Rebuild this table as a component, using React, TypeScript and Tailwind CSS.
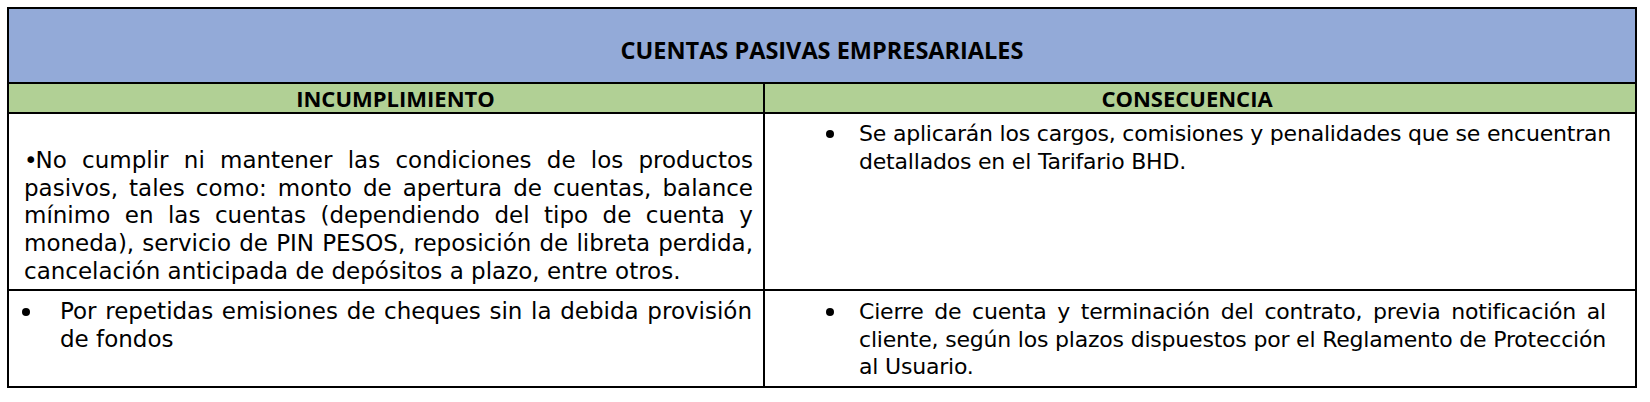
const HEAD = "font-['Open_Sans',sans-serif] font-bold leading-[26px] text-black";
const BODY = "font-['DejaVu_Sans',sans-serif] leading-[27.7px] text-black";
const LEFT = 'text-[23px]';
const RIGHT = 'text-[22px] tracking-[-0.2px]';

// líneas fijas para que el corte coincida con el documento
function Line({ children, last }: { children: React.ReactNode; last?: boolean }) {
  return (
    <div className={last ? 'whitespace-nowrap' : 'whitespace-nowrap text-justify [text-align-last:justify]'}>
      {children}
    </div>
  );
}

function Dot() {
  return <span className="mt-[10px] block h-[8px] w-[8px] rounded-full bg-black" />;
}

export default function App() {
  return (
    <div className="min-h-[402px] bg-white pl-[7px] pt-[7px]">
      <div className="w-[1630px] border-2 border-black">
        <div className="flex h-[73px] items-end justify-center bg-[#93aad8] pb-[19px]">
          <span className={`text-[23.5px] ${HEAD}`}>CUENTAS PASIVAS EMPRESARIALES</span>
        </div>

        <div className="grid h-[30px] grid-cols-[754px_1fr] border-t-2 border-black bg-[#b1d095]">
          <div className={`flex items-center justify-center pl-[19px] text-[22px] ${HEAD}`}>INCUMPLIMIENTO</div>
          <div className={`flex items-center justify-center border-l-2 border-black pr-[26px] text-[22px] ${HEAD}`}>
            CONSECUENCIA
          </div>
        </div>

        <div className={`grid h-[177px] grid-cols-[754px_1fr] border-t-2 border-black ${BODY}`}>
          <div className={`pl-[15px] pr-[10px] pt-[33px] ${LEFT}`}>
            <Line>
              <span className="mr-[-2px]">•</span>No cumplir ni mantener las condiciones de los productos
            </Line>
            <Line>pasivos, tales como: monto de apertura de cuentas, balance</Line>
            <Line>mínimo en las cuentas (dependiendo del tipo de cuenta y</Line>
            <Line>moneda), servicio de PIN PESOS, reposición de libreta perdida,</Line>
            <Line last>cancelación anticipada de depósitos a plazo, entre otros.</Line>
          </div>
          <div className={`flex border-l-2 border-black pl-[61px] pt-[6px] ${RIGHT}`}>
            <div className="w-[33px] shrink-0">
              <Dot />
            </div>
            <div className="min-w-0 flex-1 pr-[31px]">
              <Line>Se aplicarán los cargos, comisiones y penalidades que se encuentran</Line>
              <Line last>detallados en el Tarifario BHD.</Line>
            </div>
          </div>
        </div>

        <div className={`grid h-[97px] grid-cols-[754px_1fr] border-t-2 border-black ${BODY}`}>
          <div className={`flex pl-[13px] pr-[11px] pt-[7px] ${LEFT}`}>
            <div className="w-[38px] shrink-0">
              <Dot />
            </div>
            <div className="min-w-0 flex-1">
              <Line>Por repetidas emisiones de cheques sin la debida provisión</Line>
              <Line last>de fondos</Line>
            </div>
          </div>
          <div className={`flex border-l-2 border-black pl-[61px] pt-[7px] ${RIGHT}`}>
            <div className="w-[33px] shrink-0">
              <Dot />
            </div>
            <div className="min-w-0 flex-1 pr-[31px]">
              <Line>Cierre de cuenta y terminación del contrato, previa notificación al</Line>
              <Line>cliente, según los plazos dispuestos por el Reglamento de Protección</Line>
              <Line last>al Usuario.</Line>
            </div>
          </div>
        </div>
      </div>
    </div>
  );
}
